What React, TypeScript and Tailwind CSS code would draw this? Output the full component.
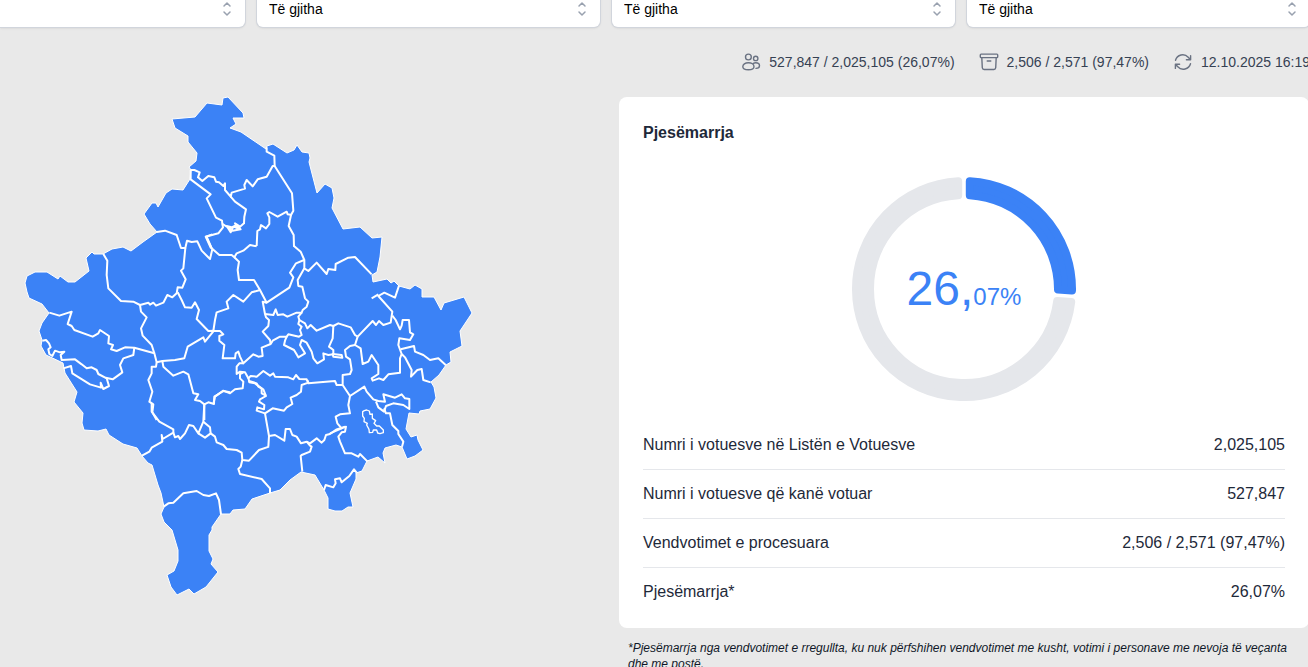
import React from "react";

const OUTLINE =
  "M223 98 228 97 243 113 244 118 233 118 236 124 230 128 241 132 266 149 267 146 273 144 287 153 294 150 297 145 302 152 309 153 310 158 309 162 317 193 325 184 332 188 334 198 332 208 343 229 360 227 372 238 382 237 380 257 377 272 372 275 373 282 387 279 391 283 394 281 399 286 410 289 415 285 422 289 422 297 434 297 441 310 444 303 464 297 472 313 460 331 462 346 450 352 451 362 446 365 439 375 431 382 434 387 436 398 430 409 420 411 419 414 409 413 406 429 411 437 417 435 418 440 423 450 415 456 407 459 402 447 396 445 385 448 383 453 385 463 378 457 367 461 362 471 356 473 356 479 350 493 353 507 348 507 342 511 335 511 328 509 328 498 324 490 315 475 301 472 290 480 280 490 270 493 252 499 245 509 233 510 230 514 221 514 212 527 212 530 209 535 209 551 213 559 211 564 218 572 206 587 194 594 189 589 177 595 171 587 167 575 174 571 178 561 178 550 172 530 164 522 161 514 164 507 161 493 158 485 152 465 148 463 142 456 137 448 123 444 109 435 106 429 98 431 84 430 82 423 83 413 74 402 77 392 65 373 63 363 46 355 41 346 42 340 39 331 42 323 49 313 42 304 29 298 27 292 25 283 27 276 35 272 47 272 58 279 60 276 68 282 75 282 89 271 86 258 92 252 94 254 103 254 112 249 123 247 131 251 143 242 157 232 150 224 144 214 152 203 156 203 158 207 166 193 172 189 183 190 190 179 191 170 189 167 196 161 197 153 188 142 188 136 175 128 172 119 195 117 207 103 222 105Z";

/* Municipality borders, drawn on a grid three times finer than the outline. */
const BORDERS: { shift: string; paths: string[] }[] = [
  {
    shift: "translate(420 270)",
    paths: [
      "M152 240 163 240 179 247 174 262 187 273 205 258 223 262 228 275 237 277 250 288 255 280 255 300 272 320 275 308 315 296 313 285 320 270 338 289 353 268 380 260 398 228 404 228 403 197 380 185 380 172",
      "M272 320 285 335 318 358 313 380 312 400 300 410 285 400 293 415 280 410 272 427 260 408 275 412 290 405 302 418 278 422 248 402",
      "M152 240 152 268 212 313 200 325 228 383 246 392 247 402 249 412 235 430 197 440 213 475",
      "M404 228 456 310 460 362 453 375 446 408 461 435 462 470",
      "M455 375 443 373 440 365 413 380 388 366 382 370 388 382 388 402 378 415 363 405 360 418 352 423 350 468",
    ],
  },
  {
    shift: "translate(30 660)",
    paths: [
      "M440 36 465 32 500 45 513 84 526 84 531 62 545 66 562 64 575 92 600 117 607 88 588 50 607 43",
      "M280 102 292 122 290 165 295 205 333 243 370 245 390 255 415 248 420 254 430 248 438 257 460 248 472 225 487 232 500 220 503 202 517 203 527 178 513 152 520 145 526 84",
      "M390 255 393 275 410 292 393 325 398 347 425 375 433 400",
      "M503 217 515 240 525 262 545 263 555 247 567 270 560 297 595 333 612 332 585 365 580 352 533 380 523 415 495 420 457 423 440 427 433 400 373 383 345 382 320 393 303 388 309 375 295 370 297 348 270 330 265 340 248 350 193 330 185 318 173 312 185 275 148 287 118 278",
      "M373 383 370 405 340 415 330 435 337 457 308 478 287 473",
      "M97 362 108 360 117 370 122 382 115 388 118 402 127 408 135 392 150 397 163 395 152 405 155 420 195 418 215 433 230 445 245 442 260 450 265 462 290 475 297 498 280 507 272 488 273 503 240 493 187 460 183 438 160 445",
      "M440 427 438 440 425 440 425 460 415 480 427 515 418 545 430 553 427 577 440 600",
      "M457 423 460 440 490 467 520 455 535 463 550 520 565 523 555 540 570 543 583 553 595 547 612 552 613 530 640 513 660 517",
      "M583 553 583 600",
    ],
  },
  {
    shift: "translate(570 660)",
    paths: [
      "M50 50 65 85 88 105 125 105 133 112 140 100 160 92 180 75 200 79",
      "M133 112 147 125 143 150 147 180 192 180 210 210 230 248 298 203 310 172 300 158 318 130 342 120",
      "M311 77 332 95 343 120 343 145 355 153 380 128 410 162 415 147 436 150 437 132 475 113 495 111 545 163",
      "M343 145 323 180 325 198 337 200 345 235 355 245 350 260 338 270 335 278 320 278 292 290 280 283 263 285 257 268 250 285 225 282",
      "M230 248 218 245 225 282 228 292 237 300 235 318 218 335 240 360 242 372",
      "M210 210 185 217 160 245 130 225 110 245 115 265 80 277 75 300 70 333 90 333 100 343 88 348 88 362 103 375 98 415 135 415 137 400 145 395 150 410 160 430 190 403 205 410 218 408 215 383 242 372 248 362 270 350 290 350 295 343 327 350 335 345 330 330 335 320 325 312 328 300 325 290 335 278",
      "M328 300 345 310 352 325 362 315 380 332 420 315 430 318 445 310 482 322 495 345 503 350",
      "M430 318 428 355 417 380 430 390 430 403 415 405 400 400 402 418 382 430 370 415 365 395 350 368 335 360 330 375 345 400 325 412 318 400 312 390 282 375 285 362 290 350",
      "M428 402 455 405 457 413 430 410Z",
      "M458 495 440 495 435 483 390 487 355 490 350 478 328 477 318 465 310 478 295 472 255 470 250 460 240 467 220 453 200 470 182 468 175 475 165 457 150 455 140 462 140 440 148 430 160 430",
      "M175 472 178 487 195 490 215 505 215 520 228 527",
      "M545 235 565 223",
    ],
  },
  {
    shift: "translate(990 810)",
    paths: [
      "M83 200 128 153 138 165 147 153 160 165 182 158 187 125 145 78 163 68 195 83 207 47",
      "M187 137 197 150 210 178 215 167 218 150 237 150 240 187 250 193 240 210 208 205 205 225 215 252 225 262 245 300 243 320 262 300 275 297 280 330 302 337",
      "M212 238 252 228 255 245 280 255 300 270 325 265 347 285",
      "M215 252 210 265 210 308 175 313 160 330 147 325 128 332 125 325 145 312 145 285 125 255 115 275 98 282 92 235 75 225 83 200",
      "M75 225 60 228 45 240 48 260 60 268 65 300 60 312 38 315 38 345 60 378 103 350 110 365 130 388 145 393 165 395 160 373 195 383 215 373 225 385 238 387 238 417 220 405 190 400 168 408 162 425 145 412 138 395",
      "M162 415 168 430 180 430 187 465 205 483 205 492 220 515 216 530",
      "M60 378 55 405 60 430 30 433 17 440 22 460 35 475 48 470 45 485 35 487 25 500 30 515 45 550 65 550 85 560 90 552 112 574",
      "M0 490 35 475",
    ],
  },
  {
    shift: "translate(180 1050)",
    paths: [
      "M275 160 275 185 298 215 340 238 340 248 308 267 305 255 307 275 275 293 268 305 246 317",
      "M340 248 345 262 355 258 360 267 375 250 387 225 400 228 415 250 430 215 433 160",
      "M430 215 450 232 452 250 435 263 415 250",
      "M452 250 465 260 470 277 490 285 500 297 530 300 545 308 547 330 567 332 597 300 627 290",
      "M460 162 465 140 490 122 510 130 525 118 548 115 550 95 540 85 540 72 550 68",
      "M547 330 542 350 535 357 540 372 605 387 630 415 630 430",
      "M311 470 325 460 340 458 370 430 410 423 430 435 447 438 468 430 477 450 483 493",
    ],
  },
  {
    shift: "translate(690 1050)",
    paths: [
      "M232 90 235 98 215 105 213 125 200 135 182 143 187 162 170 172 162 182 128 175 105 190 80 182 82 172 102 178 103 165 87 155 90 148 108 138 100 118 85 110 80 100 55 92",
      "M105 190 112 230 117 258 115 290",
      "M117 258 135 255 163 272 167 237 180 237 187 255 200 260 213 280 230 275 240 287 245 290 240 305 215 315 212 318 217 365",
      "M230 275 240 280 260 265 275 278 283 270 288 255 300 252 320 238 345 230",
      "M282 420 287 405 310 412 317 400 315 388 330 385 335 397 358 378 372 358 380 368",
    ],
  },
];

const ENCLAVE =
  "M98 425 103 422 110 420 118 423 120 433 127 432 127 445 137 452 132 460 140 468 148 468 160 480 160 488 150 491 143 489 140 480 130 480 128 487 118 488 117 478 110 465 112 460 102 455 103 445 98 438Z";

function KosovoMap() {
  return (
    <svg viewBox="0 270 1800 1545" className="w-full max-w-[600px]" role="img" aria-label="Harta e komunave">
      <path d={OUTLINE} transform="scale(3)" className="fill-[#3b82f6] stroke-white" strokeWidth="1" />
      <g className="fill-none stroke-white" strokeWidth="6" strokeLinejoin="round">
        {BORDERS.map((group) => (
          <g key={group.shift} transform={group.shift}>
            {group.paths.map((d) => (
              <path key={d} d={d} />
            ))}
          </g>
        ))}
        <path d={ENCLAVE} transform="translate(990 810)" strokeWidth="4" />
      </g>
    </svg>
  );
}

const OUTER = 108;
const INNER = 94;
const PAD = 5.8;

function sector(from: number, to: number) {
  const at = (radius: number, angle: number) =>
    `${(radius * Math.sin(angle)).toFixed(2)} ${(-radius * Math.cos(angle)).toFixed(2)}`;
  const a = from * 2 * Math.PI;
  const b = to * 2 * Math.PI;
  const large = to - from > 0.5 ? 1 : 0;
  const po = Math.asin(PAD / OUTER);
  const pi = Math.asin(PAD / INNER);
  return `M${at(OUTER, a + po)}A${OUTER} ${OUTER} 0 ${large} 1 ${at(OUTER, b - po)}L${at(INNER, b - pi)}A${INNER} ${INNER} 0 ${large} 0 ${at(INNER, a + pi)}Z`;
}

function Turnout({ share }: { share: number }) {
  return (
    <div className="grid place-items-center">
      <svg viewBox="-112 -112 224 224" className="col-start-1 row-start-1 size-56" aria-hidden="true">
        <path d={sector(0, share)} className="fill-[#3b82f6] stroke-[#3b82f6]" strokeWidth="8" strokeLinejoin="round" />
        <path d={sector(share, 1)} className="fill-[#e5e7eb] stroke-[#e5e7eb]" strokeWidth="8" strokeLinejoin="round" />
      </svg>
      <p className="col-start-1 row-start-1 text-5xl text-[#3b82f6]">
        26,<span className="text-2xl">07%</span>
      </p>
    </div>
  );
}

const iconProps = {
  viewBox: "0 0 20 20",
  className: "size-5 shrink-0 fill-none stroke-gray-500",
  strokeWidth: 1.4,
  strokeLinecap: "round" as const,
  strokeLinejoin: "round" as const,
  "aria-hidden": true,
};

function VotersIcon() {
  return (
    <svg {...iconProps}>
      <circle cx="7.4" cy="5" r="2.9" />
      <circle cx="14.7" cy="6.4" r="2.2" />
      <path d="M7.4 10.8c-3.3 0-5.6 1.7-5.6 3.9 0 2.1 2.1 3 5.6 3s5.6-.9 5.6-3c0-2.2-2.3-3.9-5.6-3.9Z" />
      <path d="M12.3 11.4c.7-.4 1.5-.6 2.4-.6 2.2 0 3.8 1.2 3.8 2.9 0 1.8-1.4 2.600-3.500 2.700" />
    </svg>
  );
}

function BoxIcon() {
  return (
    <svg {...iconProps}>
      <rect x="1.300" y="2.100" width="17.400" height="3.500" rx=".8" />
      <path d="M2.800 5.600l.5 10.200c.1 1 .8 1.700 1.800 1.700h9.800c1 0 1.700-.7 1.800-1.700l.5-10.200M8.200 9h3.600" />
    </svg>
  );
}

function RefreshIcon() {
  return (
    <svg {...iconProps}>
      <path d="M13.400 7.800h4.200V3.600M2.400 16.400v-4.200h4.200M2.500 8.300a7.500 7.500 0 0 1 12.700-3.100l2.400 2.600M17.500 11.700a7.500 7.500 0 0 1-12.700 3.100l-2.400-2.600" />
    </svg>
  );
}

function Filter({ label, first = false }: { label: string; first?: boolean }) {
  return (
    <label className="grid">
      <select
        aria-label={label}
        className={
          first
            ? "col-start-1 row-start-1 h-9 w-full appearance-none rounded-r-md bg-white text-sm text-transparent shadow-sm ring-1 ring-gray-300"
            : "col-start-1 row-start-1 h-9 w-full appearance-none rounded-md bg-white px-3 text-sm text-black shadow-sm ring-1 ring-gray-300"
        }
      >
        <option>{first ? "" : "Të gjitha"}</option>
      </select>
      <svg
        viewBox="0 0 20 20"
        className="pointer-events-none z-10 col-start-1 row-start-1 mr-2 size-5 self-center justify-self-end fill-none stroke-gray-400"
        strokeWidth="1.500"
        strokeLinecap="round"
        strokeLinejoin="round"
        aria-hidden="true"
      >
        <path d="M7 7l3-3 3 3M7 13l3 3 3-3" />
      </svg>
    </label>
  );
}

const stats = [
  { icon: <VotersIcon />, text: "527,847 / 2,025,105 (26,07%)" },
  { icon: <BoxIcon />, text: "2,506 / 2,571 (97,47%)" },
  { icon: <RefreshIcon />, text: "12.10.2025 16:19" },
];

const rows = [
  ["Numri i votuesve në Listën e Votuesve", "2,025,105"],
  ["Numri i votuesve që kanë votuar", "527,847"],
  ["Vendvotimet e procesuara", "2,506 / 2,571 (97,47%)"],
  ["Pjesëmarrja*", "26,07%"],
];

export default function App() {
  return (
    <main className="h-screen overflow-hidden bg-[#e9e9e9] font-['Liberation_Sans',Arial,sans-serif] text-gray-800">
      <div className="-mt-[9px] -mr-0.5">
        <div className="grid grid-cols-[245px_1fr_1fr_1fr] gap-3">
          <Filter label="Zgjedhjet" first />
          <Filter label="Komuna" />
          <Filter label="Vendvotimi" />
          <Filter label="Subjekti" />
        </div>

        <ul className="mt-6 flex justify-end gap-6 text-sm text-gray-700">
          {stats.map((item) => (
            <li key={item.text} className="flex items-center gap-2 whitespace-nowrap py-px">
              {item.icon}
              {item.text}
            </li>
          ))}
        </ul>

        <div className="mt-6 mr-px grid grid-cols-[600fr_690fr] items-start gap-[19px]">
          <section className="-mt-[7px]">
            <KosovoMap />
          </section>
          <section>
            <div className="rounded-lg bg-white px-6 pt-6 pb-3">
              <h2 className="font-bold">Pjesëmarrja</h2>
              <div className="pt-8 pb-5">
                <Turnout share={0.2607} />
              </div>
              <table className="w-full">
                <tbody className="divide-y divide-gray-200">
                  {rows.map(([name, value]) => (
                    <tr key={name}>
                      <th scope="row" className="py-3 text-left font-normal">
                        {name}
                      </th>
                      <td className="py-3 text-right">{value}</td>
                    </tr>
                  ))}
                </tbody>
              </table>
            </div>
            <p className="mt-3 px-[9px] text-xs text-gray-900 italic">
              *Pjesëmarrja nga vendvotimet e rregullta, ku nuk përfshihen vendvotimet me kusht, votimi i personave me
              nevoja të veçanta dhe me postë.
            </p>
          </section>
        </div>
      </div>
    </main>
  );
}
